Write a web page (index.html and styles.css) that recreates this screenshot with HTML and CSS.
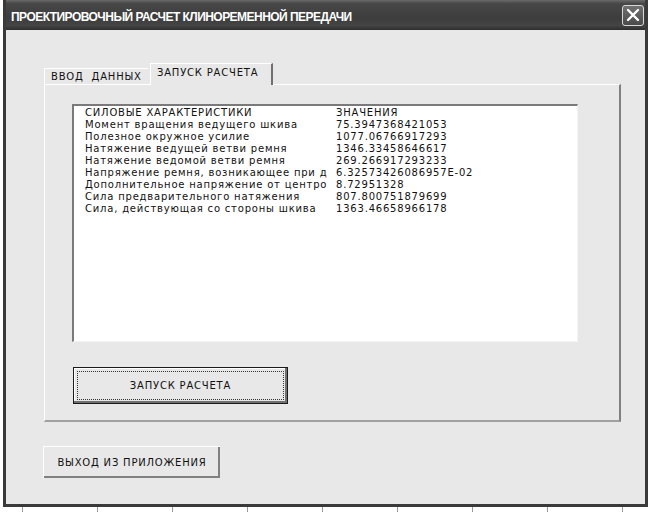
FILE: index.html
```html
<!DOCTYPE html>
<html lang="ru">
<head>
    <meta charset="UTF-8">
    <title>Проектировочный расчет клиноременной передачи</title>
    <link rel="stylesheet" href="styles.css">
</head>
<body>
    <div class="window">
        <div class="titlebar">
            <span class="title">ПРОЕКТИРОВОЧНЫЙ РАСЧЕТ КЛИНОРЕМЕННОЙ ПЕРЕДАЧИ</span>
            <span class="close">
                <svg width="14" height="14" viewBox="0 0 14 14">
                    <path d="M2 2 L12 12 M12 2 L2 12" stroke="#fff" stroke-width="2.4" stroke-linecap="round"/>
                </svg>
            </span>
        </div>

        <div class="client">
            <div class="tabs">
                <div class="tab">ВВОД&nbsp; ДАННЫХ</div>
                <div class="tab active">ЗАПУСК РАСЧЕТА</div>
            </div>

            <div class="panel">
                <div class="listbox">
                    <div class="row"><span class="col-name">СИЛОВЫЕ ХАРАКТЕРИСТИКИ</span><span>ЗНАЧЕНИЯ</span></div>
                    <div class="row"><span class="col-name">Момент вращения ведущего шкива</span><span>75.3947368421053</span></div>
                    <div class="row"><span class="col-name">Полезное окружное усилие</span><span>1077.06766917293</span></div>
                    <div class="row"><span class="col-name">Натяжение ведущей ветви ремня</span><span>1346.33458646617</span></div>
                    <div class="row"><span class="col-name">Натяжение ведомой ветви ремня</span><span>269.266917293233</span></div>
                    <div class="row"><span class="col-name">Напряжение ремня, возникающее при д</span><span>6.32573426086957E-02</span></div>
                    <div class="row"><span class="col-name">Дополнительное напряжение от центро</span><span>8.72951328</span></div>
                    <div class="row"><span class="col-name">Сила предварительного натяжения</span><span>807.800751879699</span></div>
                    <div class="row"><span class="col-name">Сила, действующая со стороны шкива</span><span>1363.46658966178</span></div>
                </div>

                <button class="btn btn-default"><span class="focus">ЗАПУСК РАСЧЕТА</span></button>
            </div>

            <button class="btn btn-exit">ВЫХОД ИЗ ПРИЛОЖЕНИЯ</button>
        </div>
    </div>
</body>
</html>
```

FILE: styles.css
```css
* {
    margin: 0;
    padding: 0;
    box-sizing: border-box;
}

body {
    width: 648px;
    height: 512px;
    overflow: hidden;
    font-family: "DejaVu Sans", sans-serif;
    background-color: #ffffff;
    background-image:
        repeating-linear-gradient(90deg, transparent 0, transparent 22px, #9a9a9a 22px, #9a9a9a 23px, transparent 23px, transparent 75px);
}

.window {
    width: 645px;
    height: 507px;
    margin-left: 3px;
    display: flex;
    flex-direction: column;
    border: 3px solid #3a3a3a;
    border-top: none;
}

/* title bar */
.titlebar {
    height: 30px;
    flex-shrink: 0;
    display: flex;
    align-items: center;
    justify-content: space-between;
    padding: 0 1px 0 5px;
    background: linear-gradient(#6a6a6a 0, #474747 12%, #3d3d3d 60%, #444 85%, #2e2e2e 100%);
}

.title {
    color: #ffffff;
    font-family: "Liberation Sans", sans-serif;
    font-weight: bold;
    font-size: 13px;
    letter-spacing: -0.6px;
    padding-top: 3px;
    transform: scaleX(0.925);
    transform-origin: left center;
}

.close {
    width: 22px;
    height: 21px;
    display: flex;
    align-items: center;
    justify-content: center;
    border: 1px solid #d8d8d8;
    border-radius: 3px;
    background: linear-gradient(#707070, #4a4a4a);
}

/* form area */
.client {
    flex: 1;
    background: #e8e8e8;
    padding: 34px 0 0 38px;
    font-size: 10px;
    letter-spacing: 0.8px;
    color: #111;
}

.tabs {
    display: flex;
    align-items: flex-end;
    height: 20px;
    white-space: nowrap;
}

.tab {
    height: 16px;
    width: 104px;
    padding-left: 6px;
    line-height: 15px;
    border-top: 1px solid #fff;
    border-left: 1px solid #fff;
}

.tab.active {
    height: 22px;
    width: 123px;
    margin-left: 2px;
    margin-bottom: -1px;
    padding-left: 6px;
    line-height: 18px;
    border-right: 2px solid #707070;
    background: #e8e8e8;
    position: relative;
}

.panel {
    width: 577px;
    height: 338px;
    padding: 19px 0 0 27px;
    border-top: 1px solid #fff;
    border-left: 1px solid #fff;
    border-right: 2px solid #808080;
    border-bottom: 2px solid #a0a0a0;
}

.listbox {
    width: 506px;
    height: 238px;
    padding: 1px 0 0 11px;
    background: #ffffff;
    border-top: 2px solid #7a7a7a;
    border-left: 2px solid #7a7a7a;
    border-right: 1px solid #f4f4f4;
    border-bottom: 1px solid #f4f4f4;
}

.row {
    display: flex;
    height: 12px;
    line-height: 12px;
    white-space: nowrap;
}

.col-name {
    width: 251px;
    flex-shrink: 0;
    overflow: hidden;
}

.btn {
    display: flex;
    align-items: center;
    justify-content: center;
    font-family: "DejaVu Sans", sans-serif;
    font-size: 10px;
    letter-spacing: 0.8px;
    color: #111;
    background: #e8e8e8;
}

.btn-default {
    width: 215px;
    height: 37px;
    margin: 25px 0 0 1px;
    padding: 3px;
    border: 1px solid #1a1a1a;
    box-shadow: inset -2px -2px 0 #707070, inset 1px 1px 0 #fff;
}

.focus {
    width: 100%;
    height: 100%;
    display: flex;
    align-items: center;
    justify-content: center;
    border: 1px dotted #333;
}

.btn-exit {
    width: 177px;
    height: 32px;
    margin: 24px 0 0 -1px;
    border: none;
    border-top: 1px solid #fff;
    border-left: 1px solid #fff;
    box-shadow: inset -2px -2px 0 #808080;
}
```
